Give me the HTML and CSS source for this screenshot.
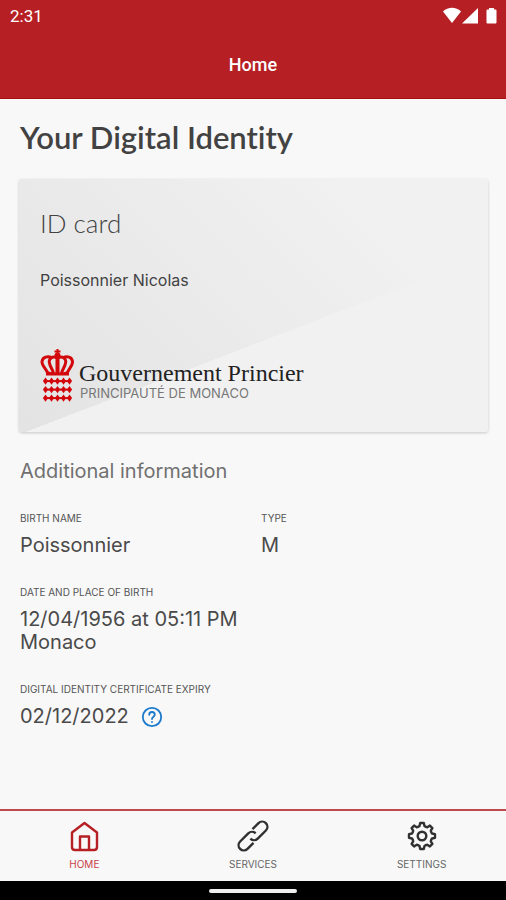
FILE: index.html
```html
<!DOCTYPE html>
<html lang="en">
<head>
  <meta charset="UTF-8" />
  <meta name="viewport" content="width=device-width, initial-scale=1.0" />
  <title>Your Digital Identity</title>
  <link rel="stylesheet" href="styles.css">
</head>
<body>
  <header class="top">
    <div class="status">
      <span>2:31</span>
      <svg width="56" height="18" viewBox="0 0 56 18" fill="currentColor" aria-hidden="true">
        <path d="M1 4.500C6-.5 14-.5 19 4.500L10 16z" />
        <path d="M36 1v15.500H20z" />
        <path d="M47 1h5v1.500h1.500q1 0 1 1v12q0 1-1 1h-8q-1 0-1-1v-12q0-1 1-1H47z" />
      </svg>
    </div>
    <div class="app-title">Home</div>
  </header>

  <main>
    <h1>Your Digital Identity</h1>

    <section class="card">
      <h2>ID card</h2>
      <p class="card-name">Poissonnier Nicolas</p>
      <div class="gov">
        <svg class="crest" width="36" height="54" viewBox="0 0 36 54" aria-hidden="true">
          <defs>
            <g id="lozenges">
              <path d="M4.500 0l2.600 3.600-2.600 3.600-2.600-3.600zM10.500 0l2.600 3.600-2.600 3.600-2.600-3.600zM16.500 0l2.600 3.600-2.600 3.600-2.600-3.600zM22.500 0l2.600 3.600-2.600 3.600-2.600-3.600zM28.500 0l2.600 3.600-2.600 3.600-2.600-3.600z" />
              <path d="M3 2.600h27v2H3z" />
            </g>
          </defs>
          <g fill="none" stroke="#d3080c" stroke-width="3">
            <path d="M8 25C7 20 1.500 17 2 12.500 2.500 8 8 6.500 12 9" />
            <path d="M27 25c1-5 6-8 5.500-12.500C32 8 27 6.500 23 9" />
            <path d="M13.500 24C12 19 8 15 9.500 11c1-3 4.500-3.500 7-2.500" />
            <path d="M21.500 24c1.500-5 5.500-9 4-13-1-3-4.500-3.500-7-2.500" />
            <path d="M17.500 8v16" stroke-width="4" />
          </g>
          <g fill="#d3080c">
            <circle cx="17.500" cy="6.500" r="3" />
            <path d="M16.500 0h2v1.500h2v2h-2V5h-2V3.500h-2v-2h2z" />
            <path d="M6 22q11.500 3 23 0v4.500H6z" />
            <use href="#lozenges" x="1" y="28.500" />
            <use href="#lozenges" x="1" y="37" />
            <use href="#lozenges" x="1" y="45.500" />
          </g>
        </svg>
        <div>
          <div class="gov-name">Gouvernement Princier</div>
          <div class="gov-sub">PRINCIPAUTÉ DE MONACO</div>
        </div>
      </div>
    </section>

    <h3>Additional information</h3>

    <dl class="info">
      <div>
        <dt>BIRTH NAME</dt>
        <dd>Poissonnier</dd>
      </div>
      <div>
        <dt>TYPE</dt>
        <dd>M</dd>
      </div>
      <div class="wide">
        <dt>DATE AND PLACE OF BIRTH</dt>
        <dd>12/04/1956 at 05:11 PM<br>Monaco</dd>
      </div>
      <div class="wide">
        <dt>DIGITAL IDENTITY CERTIFICATE EXPIRY</dt>
        <dd class="expiry">
          02/12/2022
          <button type="button" class="help" aria-label="Help">
            <svg width="22" height="22" viewBox="0 0 22 22" fill="none" stroke="currentColor" stroke-width="1.800" stroke-linecap="round" aria-hidden="true">
              <circle cx="11" cy="11" r="9.200" />
              <path d="M8.200 8.800C8.200 7 9.400 6 11 6s2.800 1 2.800 2.600c0 2-2.800 2.200-2.800 4.400M11 15.800v.2" />
            </svg>
          </button>
        </dd>
      </div>
    </dl>
  </main>

  <nav class="tabs">
    <a href="#home" class="tab active">
      <svg width="32" height="32" viewBox="0 0 32 32" aria-hidden="true">
        <path d="M4 12.500L16.500 3 29 12.500V27q0 3-3 3H7q-3 0-3-3z" />
        <path d="M12 30V16.500h9V30" />
      </svg>
      HOME
    </a>
    <a href="#services" class="tab">
      <svg width="32" height="32" viewBox="-16 -16 32 32" aria-hidden="true">
        <g transform="rotate(-45)">
          <path d="M4.500-5.200H13a5.200 5.200 0 0 1 0 10.400H1.500a5.200 5.200 0 0 1-5.200-5.200" />
          <path d="M-4.500 5.200H-13a5.200 5.200 0 0 1 0-10.400H-1.500a5.200 5.200 0 0 1 5.200 5.200" />
        </g>
      </svg>
      SERVICES
    </a>
    <a href="#settings" class="tab">
      <svg width="32" height="32" viewBox="-16 -16 32 32" aria-hidden="true">
        <path d="M-1.800-13H1.800L2.500-10Q3.800-9 5.300-8.800L7.900-10.400 10.400-7.900 8.800-5.300Q9-3.800 10-2.500L13-1.800V1.800L10 2.500Q9 3.800 8.800 5.300L10.400 7.900 7.900 10.400 5.300 8.800Q3.800 9 2.500 10L1.800 13H-1.800L-2.500 10Q-3.800 9-5.300 8.800L-7.900 10.400-10.400 7.900-8.800 5.300Q-9 3.800-10 2.500L-13 1.800V-1.800L-10-2.500Q-9-3.800-8.800-5.300L-10.400-7.900-7.900-10.400-5.300-8.800Q-3.800-9-2.500-10z" />
        <circle r="4.300" />
      </svg>
      SETTINGS
    </a>
  </nav>
  <div class="gesture"></div>
</body>
</html>
```
FILE: styles.css
```css
:root {
  --red: #b62025;
  --bg: #f8f8f8;
  --text: #424242;
}

* {
  box-sizing: border-box;
}

body {
  margin: 0;
  min-height: 100vh;
  display: flex;
  flex-direction: column;
  background: var(--bg);
  color: var(--text);
  font-family: Inter, sans-serif;
}

h1, h2, h3, p, dl, dd {
  margin: 0;
}

.top {
  background: var(--red);
  color: #fff;
  border-bottom: 1px solid #a80d13;
  font-family: Roboto, sans-serif;
}

.status {
  display: flex;
  justify-content: space-between;
  align-items: center;
  height: 32px;
  padding: 0 8px 0 10px;
  font-size: 17px;
}

.app-title {
  height: 66px;
  line-height: 66px;
  text-align: center;
  font-size: 18px;
  font-weight: 500;
}

main {
  flex: 1;
  padding: 20px 18px 20px 19px;
}

h1 {
  padding-left: 1px;
  font: 600 31px/36px Lato, sans-serif;
  font-variant-ligatures: none;
}

.card {
  margin-top: 24px;
  padding: 28px 21px 29px;
  border-radius: 3px;
  background:
    linear-gradient(159deg, transparent 59%, #f1f1f1 59%),
    linear-gradient(45deg, #e3e3e3, #f1f1f1 80%);
  box-shadow: 0 1px 3px rgba(0, 0, 0, 0.2);
}

.card h2 {
  font: 300 26px/32px Lato, sans-serif;
}

.card-name {
  margin-top: 30px;
  font-size: 16px;
  line-height: 22px;
}

.gov {
  display: flex;
  gap: 3px;
  margin-top: 58px;
}

.gov-name {
  padding-top: 11px;
  color: #222;
  font: 24px/26px "Liberation Serif", serif;
}

.gov-sub {
  padding-left: 1px;
  color: #777;
  font-size: 13px;
  line-height: 14px;
}

h3 {
  margin-top: 26px;
  padding-left: 1px;
  color: #707070;
  font-size: 20px;
  line-height: 26px;
  font-weight: 400;
}

.info {
  display: grid;
  grid-template-columns: 1fr 1fr;
  gap: 29px 14px;
  margin-top: 28px;
  padding-left: 1px;
}

.wide {
  grid-column: 1 / -1;
}

dt {
  color: #555;
  font-size: 10px;
  line-height: 12px;
}

dd {
  margin-top: 10px;
  color: #4a4a4a;
  font-size: 20px;
  line-height: 23px;
}

.expiry {
  display: flex;
  align-items: center;
  gap: 12px;
}

.help {
  display: flex;
  padding: 0;
  border: none;
  background: none;
  color: #1b7acb;
  cursor: pointer;
}

.tabs {
  display: grid;
  grid-template-columns: repeat(3, 1fr);
  height: 72px;
  border-top: 2px solid #bd4a4f;
}

.tab {
  display: flex;
  flex-direction: column;
  align-items: center;
  gap: 6px;
  padding-top: 9px;
  color: #666;
  font-size: 10px;
  line-height: 12px;
  text-decoration: none;
}

.tab svg {
  fill: none;
  stroke: #303030;
  stroke-width: 2.4px;
  stroke-linejoin: round;
}

.tab.active {
  color: #c74348;
}

.tab.active svg {
  stroke: var(--red);
}

.gesture {
  display: flex;
  justify-content: center;
  align-items: center;
  height: 19px;
  background: #000;
}

.gesture::before {
  content: "";
  width: 88px;
  height: 4px;
  border-radius: 2px;
  background: #eee;
}
```
